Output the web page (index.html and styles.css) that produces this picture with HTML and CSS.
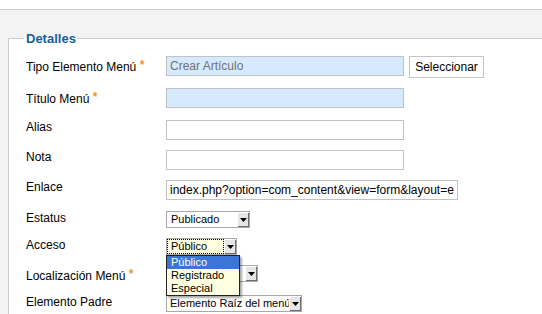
FILE: index.html
```html
<!DOCTYPE html>
<html>
<head>
    <meta charset="utf-8">
    <title>Detalles</title>
    <link rel="stylesheet" href="styles.css">
</head>
<body>
<div id="element-box">
    <fieldset class="details">
        <legend>Detalles</legend>
        <div class="form">
            <label class="req">Tipo Elemento Menú <span class="star">*</span></label>
            <div class="ctrl">
                <input type="text" class="text readonly" value="Crear Artículo" readonly />
                <button class="btn">Seleccionar</button>
            </div>

            <label class="req">Título Menú <span class="star">*</span></label>
            <div class="ctrl"><input type="text" class="text required" value="" /></div>

            <label>Alias</label>
            <div class="ctrl"><input type="text" class="text" value="" /></div>

            <label>Nota</label>
            <div class="ctrl"><input type="text" class="text" value="" /></div>

            <label>Enlace</label>
            <div class="ctrl"><input type="text" class="text wide" value="index.php?option=com_content&amp;view=form&amp;layout=edit" /></div>

            <label>Estatus</label>
            <div class="ctrl">
                <div class="select s-status"><span class="val">Publicado</span><span class="arrow"><svg width="7" height="4" viewBox="0 0 7 4"><path d="M0 0h7L3.5 4z" fill="#000"/></svg></span></div>
            </div>

            <label>Acceso</label>
            <div class="ctrl open">
                <div class="select s-access focus"><span class="val">Público</span><span class="arrow"><svg width="7" height="4" viewBox="0 0 7 4"><path d="M0 0h7L3.5 4z" fill="#000"/></svg></span></div>
                <div class="list">
                    <div class="on">Público</div>
                    <div>Registrado</div>
                    <div>Especial</div>
                </div>
            </div>

            <label class="req">Localización Menú <span class="star">*</span></label>
            <div class="ctrl">
                <!-- value is hidden under the open Acceso list -->
                <div class="select s-menu"><span class="val"></span><span class="arrow"><svg width="7" height="4" viewBox="0 0 7 4"><path d="M0 0h7L3.5 4z" fill="#000"/></svg></span></div>
            </div>

            <label>Elemento Padre</label>
            <div class="ctrl">
                <div class="select s-parent"><span class="val">Elemento Raíz del menú</span><span class="arrow"><svg width="7" height="4" viewBox="0 0 7 4"><path d="M0 0h7L3.5 4z" fill="#000"/></svg></span></div>
            </div>
        </div>
    </fieldset>
</div>
</body>
</html>
```

FILE: styles.css
```css
        body{
            margin:0;
            font-family:"Liberation Sans", Arial, sans-serif;
            font-size:12px;
            color:#000;
            background:#fff;
            overflow:hidden;
        }
        #element-box{
            margin-top:9px;
            border-top:1px solid #ccc;
            background:#f3f3f3;
            padding:21px 0 0 8px;
            height:284px;
        }
        fieldset.details{
            margin:0;
            width:520px;
            min-height:260px;
            border:1px solid #ccc;
            border-right:0;
            background:#fff;
            padding:10px 0 0 17px;
        }
        fieldset.details legend{
            margin-left:-2px;
            padding:0 2px;
            font-size:13px;
            line-height:15px;
            font-weight:bold;
            color:#17609f;
        }
        .form{
            display:grid;
            grid-template-columns:140px auto;
            grid-template-rows:32px 32px 30px 30px 31px 27px 27px 30px 20px;
            align-items:start;
        }
        .form label{
            line-height:14px;
            white-space:nowrap;
        }
        .form label.req{
            padding-top:4px;
        }
        .star{
            color:#f7931e;
            font-weight:bold;
            position:relative;
            top:-2px;
        }
        .ctrl{
            display:flex;
            align-items:flex-start;
        }
        .ctrl.open{
            position:relative;
        }
        input.text{
            box-sizing:border-box;
            width:238px;
            height:20px;
            margin:0;
            padding:0 3px;
            border:1px solid #c2c2c2;
            background:#fff;
            font:12px "Liberation Sans", Arial, sans-serif;
            color:#000;
            outline:none;
        }
        input.readonly{
            background:#d6eaff;
            color:#707070;
        }
        input.required{
            background:#d6eaff;
        }
        input.wide{
            width:292px;
        }
        .btn{
            box-sizing:border-box;
            margin-left:5px;
            width:75px;
            height:22px;
            padding:0;
            border:1px solid #c4c4c4;
            background:#fff;
            font:12px "Liberation Sans", Arial, sans-serif;
            color:#000;
        }
        .select{
            display:flex;
            box-sizing:border-box;
            height:17px;
            border:1px solid #a8a8a8;
            background:#fff;
            font-size:11px;
        }
        .select .val{
            flex:1;
            padding-left:4px;
            line-height:15px;
            white-space:nowrap;
            overflow:hidden;
        }
        .select .arrow{
            width:12px;
            display:flex;
            align-items:center;
            justify-content:center;
            background:#e6e6e6;
            box-shadow:inset 1px 1px #fff, inset -1px -1px #6e6e6e;
        }
        .select.focus .val{
            background:#ffffe0;
            outline:1px dotted #000;
            outline-offset:-1px;
        }
        .s-status{ width:84px; }
        .s-access{ width:71px; }
        .s-menu{ width:92px; }
        .s-parent{ width:136px; }
        .s-parent .val{ padding-left:3px; }
        .list{
            position:absolute;
            left:0;
            top:17px;
            z-index:2;
            width:74px;
            box-sizing:border-box;
            border:1px solid #222;
            background:#ffffe1;
            box-shadow:2px 2px 2px rgba(0,0,0,0.35);
            font-size:11px;
        }
        .list div{
            height:13px;
            line-height:13px;
            padding-left:4px;
        }
        .list div.on{
            background:#3a76d6;
            color:#fff;
        }
```
